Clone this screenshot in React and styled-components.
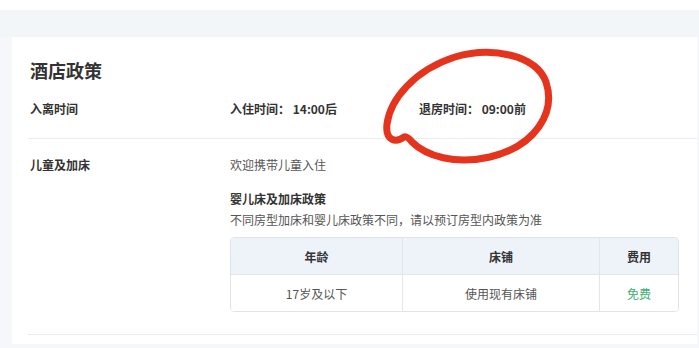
import React from 'react';
import styled, {createGlobalStyle} from "styled-components";

const GlobalStyle = createGlobalStyle`
    html, body {
        margin: 0;
        padding: 0;
        background: #f5f7fa;
        font-family: "Noto Sans CJK SC", "Noto Sans", "Liberation Sans", sans-serif;
    }
`;

const Page = styled.div`
    width: 699px;
    height: 348px;
    overflow: hidden;
    position: relative;
    display: flex;
    flex-direction: column;
`;

const TopStrip = styled.div`
    height: 10px;
    background: #ffffff;
`;

const Band = styled.div`
    height: 27px;
    background: #f3f6f9;
`;

const Card = styled.div`
    flex: 1;
    margin: 0 2px 4px 12px;
    background: #ffffff;
    padding: 20px 0 0 16px;
`;

const Title = styled.h2`
    margin: 0 0 17px 2px;
    font-size: 18px;
    line-height: 26px;
    font-weight: 600;
    color: #333;
`;

const Row = styled.div`
    display: flex;
    padding: ${props => props.$top || 0}px 0 ${props => props.$bottom || 0}px 0;
    border-bottom: 1px solid #ececec;
`;

const Label = styled.div`
    width: 202px;
    flex-shrink: 0;
    padding-left: 2px;
    box-sizing: border-box;
    font-size: 12px;
    line-height: 18px;
    font-weight: 600;
    color: #333;
`;

const Content = styled.div`
    display: flex;
    flex-direction: column;
    align-items: flex-start;
`;

const Times = styled.div`
    display: flex;
    gap: 82px;
`;

const Strong = styled.div`
    font-size: 12px;
    line-height: 18px;
    font-weight: 600;
    color: #333;
    margin-top: ${props => props.$mt || 0}px;
`;

const Text = styled.div`
    font-size: 12px;
    line-height: 18px;
    color: #555;
    margin-top: ${props => props.$mt || 0}px;
`;

const Table = styled.div`
    margin-top: 8px;
    border: 1px solid #dfe3ea;
    border-radius: 4px;
    overflow: hidden;
    display: grid;
    grid-template-columns: 171px 197px 79px;
`;

const Cell = styled.div`
    height: 36px;
    display: flex;
    align-items: center;
    justify-content: center;
    font-size: 12px;
    font-weight: ${props => props.$head ? 600 : 400};
    color: ${props => props.$color || (props.$head ? '#333' : '#555')};
    background: ${props => props.$head ? '#eef2f9' : '#fff'};
    border-left: ${props => props.$first ? 'none' : '1px solid #e2e6ec'};
    border-top: ${props => props.$head ? 'none' : '1px solid #e2e6ec'};
`;

const Mark = styled.svg`
    position: absolute;
    left: 0;
    top: 0;
    pointer-events: none;
`;

const App = () => {
    return <Page>
        <GlobalStyle />
        <TopStrip />
        <Band />
        <Card>
            <Title>酒店政策</Title>
            <Row $bottom={20}>
                <Label>入离时间</Label>
                <Times>
                    <Strong>入住时间： 14:00后</Strong>
                    <Strong>退房时间： 09:00前</Strong>
                </Times>
            </Row>
            <Row $top={17} $bottom={22}>
                <Label>儿童及加床</Label>
                <Content>
                    <Text>欢迎携带儿童入住</Text>
                    <Strong $mt={16}>婴儿床及加床政策</Strong>
                    <Text $mt={3}>不同房型加床和婴儿床政策不同，请以预订房型内政策为准</Text>
                    <Table>
                        <Cell $head $first>年龄</Cell>
                        <Cell $head>床铺</Cell>
                        <Cell $head>费用</Cell>
                        <Cell $first>17岁及以下</Cell>
                        <Cell>使用现有床铺</Cell>
                        <Cell $color="#3fae73">免费</Cell>
                    </Table>
                </Content>
            </Row>
        </Card>
        <Mark width="699" height="348" viewBox="0 0 699 348">
            <path
                d="M 404 137 C 396 143, 385 141, 387 124 C 390 100, 414 70, 455 57 C 492 46, 536 55, 546 82 C 556 112, 536 146, 490 157 C 455 165, 426 156, 412 142 C 408 137, 406 136, 404 137 Z"
                fill="none"
                stroke="#e5341d"
                strokeWidth="7"
                strokeLinejoin="round"
            />
        </Mark>
    </Page>
};

export default App;
